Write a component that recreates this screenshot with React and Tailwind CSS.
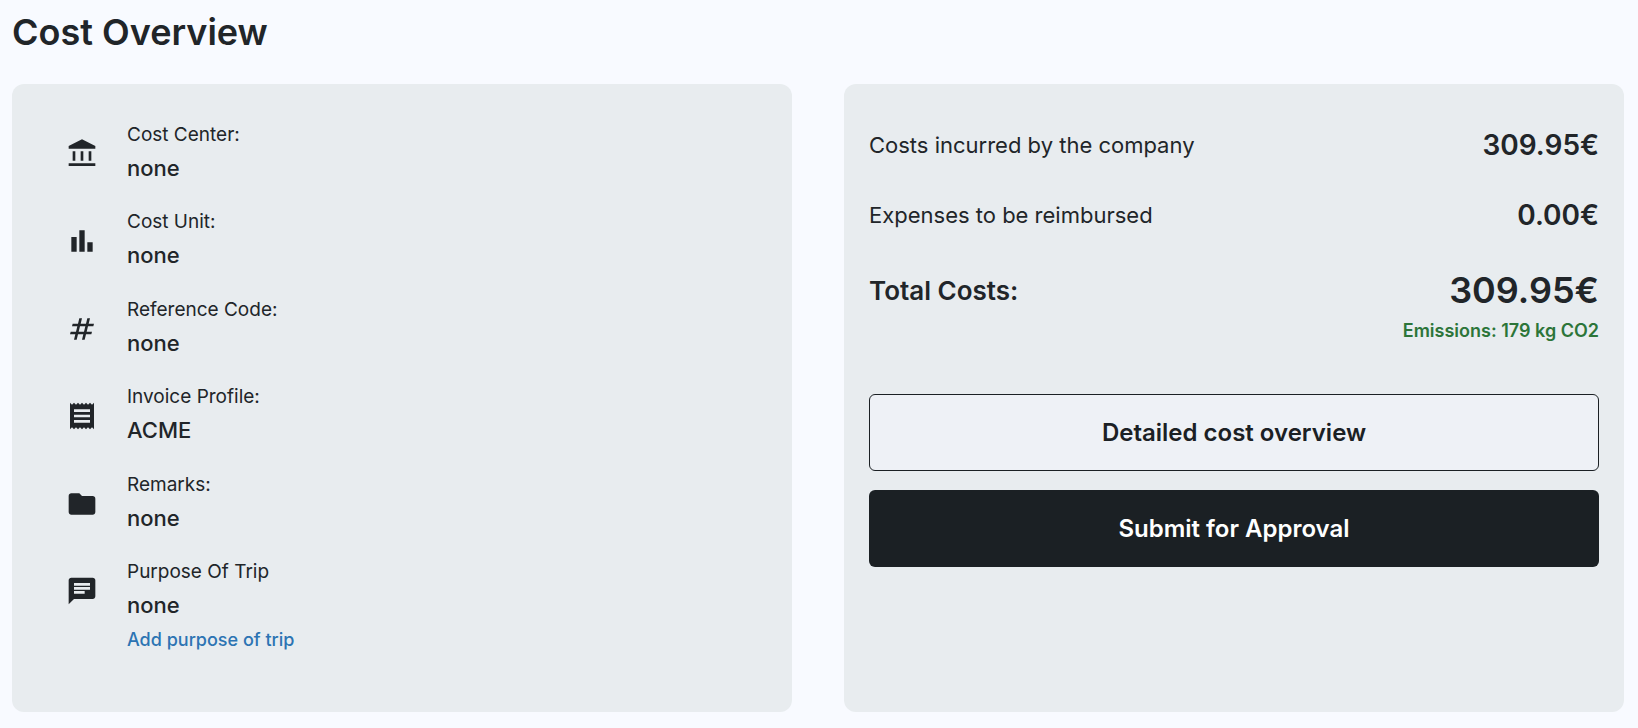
const SYMBOLS = {
  bank: "M200-280v-280h80v280h-80Zm240 0v-280h80v280h-80ZM80-120v-80h800v80H80Zm600-160v-280h80v280h-80ZM80-640v-80l400-200 400 200v80H80Z",
  chart: "M640-160v-280h160v280H640Zm-240 0v-640h160v640H400Zm-240 0v-440h160v440H160Z",
  tag: "m240-160 40-160H120l20-80h160l40-160H180l20-80h160l40-160h80l-40 160h160l40-160h80l-40 160h160l-20 80H660l-40 160h160l-20 80H600l-40 160h-80l40-160H360l-40 160h-80Zm140-240h160l40-160H420l-40 160Z",
  receipt:
    "M120-80v-800l60 60 60-60 60 60 60-60 60 60 60-60 60 60 60-60 60 60 60-60 60 60 60-60v800l-60-60-60 60-60-60-60 60-60-60-60 60-60-60-60 60-60-60-60 60-60-60-60 60Zm120-200h480v-80H240v80Zm0-160h480v-80H240v80Zm0-160h480v-80H240v80Z",
  folder:
    "M160-160q-33 0-56.500-23.500T80-240v-480q0-33 23.500-56.500T160-800h240l80 80h320q33 0 56.500 23.500T880-640v400q0 33-23.500 56.500T800-160H160Z",
  chat: "M240-400h320v-80H240v80Zm0-120h480v-80H240v80Zm0-120h480v-80H240v80ZM80-80v-720q0-33 23.500-56.500T160-880h640q33 0 56.500 23.500T880-800v480q0 33-23.500 56.500T800-240H240L80-80Z",
};

const DETAILS = [
  { icon: "bank", label: "Cost Center:", value: "none" },
  { icon: "chart", label: "Cost Unit:", value: "none" },
  { icon: "tag", label: "Reference Code:", value: "none" },
  { icon: "receipt", label: "Invoice Profile:", value: "ACME" },
  { icon: "folder", label: "Remarks:", value: "none" },
  { icon: "chat", label: "Purpose Of Trip", value: "none", action: "Add purpose of trip" },
];

function Symbol({ name }) {
  return (
    <svg viewBox="0 -960 960 960" className="mt-[19px] size-8 shrink-0 fill-current" fillRule="evenodd" aria-hidden="true">
      <path d={SYMBOLS[name]} />
    </svg>
  );
}

function Detail({ icon, label, value, action }) {
  return (
    <li className="flex items-start gap-[29px]">
      <Symbol name={icon} />
      <div className="flex flex-col items-start">
        <span className="text-[19px] leading-8">{label}</span>
        <span className="text-[22px] leading-[34px] font-medium">{value}</span>
        {action && (
          <a href="#purpose" className="text-[18px] leading-9 font-medium text-[#2c74b3]">
            {action}
          </a>
        )}
      </div>
    </li>
  );
}

function CostRow({ label, value }) {
  return (
    <div className="flex items-center justify-between">
      <dt className="text-[22px] leading-8">{label}</dt>
      <dd className="text-[28px] leading-8 font-semibold">{value}</dd>
    </div>
  );
}

export default function App() {
  return (
    <main className="flex min-h-screen flex-col bg-[#f8faff] pt-3 pr-3.5 pb-4 pl-3 font-['Inter','Liberation_Sans',sans-serif] text-[#212529]">
      <h1 className="text-[36px] leading-10 font-semibold">Cost Overview</h1>
      <div className="mt-8 grid flex-1 grid-cols-1 gap-13 md:grid-cols-2">
        <section className="flex flex-col rounded-xl bg-[#e8ecef] pt-[35px] pr-6 pb-[54px] pl-[54px]">
          <ul className="flex flex-1 flex-col justify-between">
            {DETAILS.map((detail) => (
              <Detail key={detail.label} {...detail} />
            ))}
          </ul>
        </section>
        <section className="rounded-xl bg-[#e8ecef] px-[25px] pt-[45px] pb-6">
          <dl className="flex flex-col gap-[38px]">
            <CostRow label="Costs incurred by the company" value="309.95€" />
            <CostRow label="Expenses to be reimbursed" value="0.00€" />
            <div className="flex items-start justify-between">
              <dt className="text-[26px] leading-11 font-semibold">Total Costs:</dt>
              <dd className="flex flex-col items-end">
                <span className="text-[36px] leading-[42px] font-semibold">309.95€</span>
                <span className="text-[18px] leading-10 font-semibold text-[#2c7539]">Emissions: 179 kg CO2</span>
              </dd>
            </div>
          </dl>
          <div className="mt-[43px] flex flex-col gap-[19px]">
            <button type="button" className="h-[77px] rounded-md border border-[#1b2024] bg-[#eef1f6] text-2xl font-semibold text-[#1b2024]">
              Detailed cost overview
            </button>
            <button type="button" className="h-[77px] rounded-md bg-[#1b2024] text-2xl font-semibold text-white">
              Submit for Approval
            </button>
          </div>
        </section>
      </div>
    </main>
  );
}
